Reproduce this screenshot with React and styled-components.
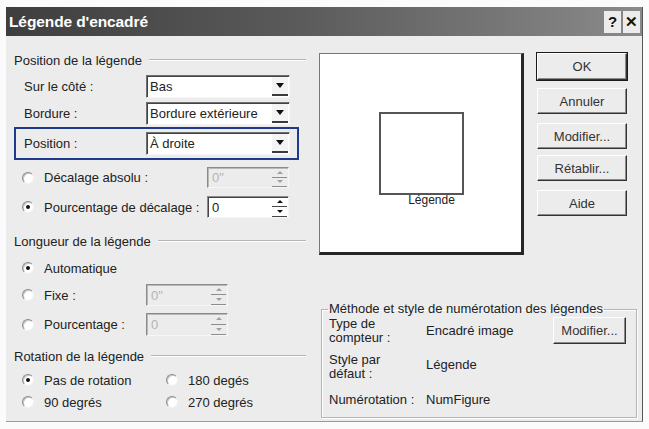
import React from "react"
import styled, { createGlobalStyle } from "styled-components"

const Global = createGlobalStyle`
  body {
    margin: 0;
    background: #fbfbfb;
    font-family: "Liberation Sans", Arial, sans-serif;
    font-size: 13px;
    color: #222;
  }
`

const Window = styled.div`
  width: 637px;
  height: 415px;
  margin: 7px 0 0 6px;
  background: #ececec;
  border-right: 1px solid #555;
  border-bottom: 1px solid #9a9a9a;
  box-sizing: border-box;
  display: flex;
  flex-direction: column;
`

const TitleBar = styled.div`
  height: 29px;
  flex: none;
  display: flex;
  align-items: center;
  padding: 0 2px 0 3px;
  background: linear-gradient(90deg, #3e3e3e 0%, #5a5a5a 45%, #8a8a8a 100%);
`

const Title = styled.div`
  flex: 1;
  color: #fff;
  font-weight: bold;
  font-size: 15.5px;
  letter-spacing: -0.1px;
`

const CaptionButton = styled.div`
  width: 17px;
  height: 22px;
  margin-left: 2px;
  background: #ececec;
  display: flex;
  align-items: center;
  justify-content: center;
  font-weight: bold;
  font-size: 15px;
  color: #111;
`

const Body = styled.div`
  flex: 1;
  display: flex;
  padding: 17px 6px 0 8px;
`

const LeftCol = styled.div`
  width: 292px;
  flex: none;
  display: flex;
  flex-direction: column;
`

const SectionHeader = styled.div`
  display: flex;
  align-items: center;
  height: 14px;
  margin-top: ${(p) => p.$top || 0}px;
  &::after {
    content: "";
    flex: 1;
    margin-left: 7px;
    border-top: 1px solid #b4b4b4;
    border-bottom: 1px solid #fff;
  }
`

const FieldRow = styled.div`
  display: flex;
  align-items: center;
  height: 23px;
  padding-left: 10px;
  margin-top: ${(p) => p.$top || 0}px;
`

const Highlight = styled.div`
  width: 285px;
  box-sizing: border-box;
  border: 2px solid #1d3a8c;
  padding: 3px 0 3px 8px;
  margin-top: 2px;
  display: flex;
  align-items: center;
`

const FieldLabel = styled.span`
  width: 122px;
  flex: none;
`

const SelectBox = styled.div`
  width: 144px;
  height: 23px;
  box-sizing: border-box;
  background: #fff;
  border: 1px solid;
  border-color: #6e6e6e #f6f6f6 #f6f6f6 #6e6e6e;
  box-shadow: inset 1px 1px 0 #444;
  display: flex;
  align-items: center;
  padding-left: 3px;
`

const SelectText = styled.span`
  flex: 1;
`

const DropButton = styled.span`
  width: 16px;
  height: 19px;
  margin-right: 1px;
  box-sizing: border-box;
  background: #f4f4f4;
  border-bottom: 2px solid #3a3a3a;
  display: flex;
  align-items: center;
  justify-content: center;
  &::before {
    content: "";
    border-left: 4px solid transparent;
    border-right: 4px solid transparent;
    border-top: 5px solid #111;
  }
`

const RadioRow = styled.div`
  display: flex;
  align-items: center;
  height: ${(p) => p.$h || 20}px;
  padding-left: 8px;
  margin-top: ${(p) => p.$top || 0}px;
`

const RadioDot = styled.span`
  width: 12px;
  height: 12px;
  flex: none;
  box-sizing: border-box;
  border-radius: 50%;
  background: #fff;
  border: 1px solid;
  border-color: #8a8a8a #f2f2f2 #f2f2f2 #8a8a8a;
  box-shadow: inset 1px 1px 0 #c8c8c8;
  display: flex;
  align-items: center;
  justify-content: center;
  margin-right: 10px;
  &::after {
    content: "";
    width: 4px;
    height: 4px;
    border-radius: 50%;
    background: ${(p) => (p.$on ? "#111" : "transparent")};
  }
`

const RadioLabel = styled.span`
  width: ${(p) => (p.$w ? p.$w + "px" : "auto")};
  flex: none;
`

const Spin = styled.div`
  width: 82px;
  height: ${(p) => p.$h || 22}px;
  box-sizing: border-box;
  background: ${(p) => (p.$disabled ? "#ececec" : "#fff")};
  color: ${(p) => (p.$disabled ? "#b4b4b4" : "#222")};
  border: 1px solid;
  border-color: #8a8a8a #f6f6f6 #f6f6f6 #8a8a8a;
  box-shadow: inset 1px 1px 0 ${(p) => (p.$disabled ? "#b8b8b8" : "#444")};
  display: flex;
  align-items: center;
  padding-left: 4px;
`

const SpinValue = styled.span`
  flex: 1;
`

const SpinArrows = styled.span`
  width: 15px;
  height: 100%;
  display: flex;
  flex-direction: column;
  margin-right: 1px;
`

const SpinArrow = styled.span`
  flex: 1;
  display: flex;
  align-items: center;
  justify-content: center;
  border-bottom: 1px solid ${(p) => (p.$disabled ? "#8e8e8e" : "#444")};
  &::before {
    content: "";
    border-left: 3px solid transparent;
    border-right: 3px solid transparent;
    ${(p) => (p.$down ? "border-top" : "border-bottom")}: 3px solid
      ${(p) => (p.$disabled ? "#a0a0a0" : "#111")};
  }
`

const RadioGrid = styled.div`
  display: grid;
  grid-template-columns: 144px 1fr;
  row-gap: 2px;
  margin-top: 7px;
`

const RightCol = styled.div`
  flex: 1;
  margin-left: 13px;
  display: flex;
  flex-direction: column;
`

const TopRight = styled.div`
  display: flex;
  align-items: flex-start;
`

const Preview = styled.div`
  width: 205px;
  height: 202px;
  box-sizing: border-box;
  background: #fff;
  border-top: 1px solid #777;
  border-left: 1px solid #777;
  border-right: 3px solid #262626;
  border-bottom: 3px solid #262626;
  display: flex;
  flex-direction: column;
  align-items: center;
  padding-top: 58px;
`

const FrameSquare = styled.div`
  width: 85px;
  height: 83px;
  box-sizing: border-box;
  border: 2px solid #555;
  margin-left: 2px;
`

const PreviewCaption = styled.div`
  font-size: 12px;
  margin: -1px 0 0 22px;
  line-height: 13px;
`

const ButtonStack = styled.div`
  margin-left: 13px;
  width: 90px;
  display: flex;
  flex-direction: column;
`

const DialogButton = styled.div`
  width: ${(p) => p.$w || 90}px;
  height: ${(p) => p.$h || 26}px;
  box-sizing: border-box;
  margin-top: ${(p) => p.$top || 0}px;
  background: #ececec;
  border: 1px solid;
  border-color: #fff #333 #333 #fff;
  box-shadow: ${(p) =>
    p.$default ? "0 0 0 1px #1a1a1a, inset -1px -1px 0 #8a8a8a" : "inset -1px -1px 0 #8a8a8a"};
  display: flex;
  align-items: center;
  justify-content: center;
  color: #333;
`

const Group = styled.fieldset`
  margin: 47px 0 0 2px;
  width: 316px;
  height: 116px;
  box-sizing: border-box;
  border: 1px solid #b4b4b4;
  box-shadow: inset 1px 1px 0 #fff, 1px 1px 0 #fff;
  padding: 0 10px 0 7px;
`

const GroupLegend = styled.legend`
  padding: 0 1px;
  margin-left: -1px;
  line-height: 14px;
`

const InfoGrid = styled.div`
  display: grid;
  grid-template-columns: 97px 1fr auto;
  align-items: center;
  line-height: 14px;
`

const InfoLabel = styled.div`
  padding: ${(p) => p.$pad || "0"};
`

const InfoValue = styled.div`
  padding: ${(p) => p.$pad || "0"};
`

function Select({ value }) {
  return (
    <SelectBox>
      <SelectText>{value}</SelectText>
      <DropButton />
    </SelectBox>
  )
}

function SpinBox({ value, disabled, h }) {
  return (
    <Spin $disabled={disabled} $h={h}>
      <SpinValue>{value}</SpinValue>
      <SpinArrows>
        <SpinArrow $disabled={disabled} />
        <SpinArrow $disabled={disabled} $down />
      </SpinArrows>
    </Spin>
  )
}

export default function App() {
  return (
    <>
      <Global />
      <Window>
        <TitleBar>
          <Title>Légende d'encadré</Title>
          <CaptionButton>?</CaptionButton>
          <CaptionButton>✕</CaptionButton>
        </TitleBar>
        <Body>
          <LeftCol>
            <SectionHeader>Position de la légende</SectionHeader>
            <FieldRow $top={8}>
              <FieldLabel>Sur le côté :</FieldLabel>
              <Select value="Bas" />
            </FieldRow>
            <FieldRow $top={4}>
              <FieldLabel>Bordure :</FieldLabel>
              <Select value="Bordure extérieure" />
            </FieldRow>
            <Highlight>
              <FieldLabel>Position :</FieldLabel>
              <Select value="À droite" />
            </Highlight>
            <RadioRow $h={21} $top={7}>
              <RadioDot />
              <RadioLabel $w={163}>Décalage absolu :</RadioLabel>
              <SpinBox value="0&quot;" disabled h={21} />
            </RadioRow>
            <RadioRow $h={22} $top={8}>
              <RadioDot $on />
              <RadioLabel $w={163}>Pourcentage de décalage :</RadioLabel>
              <SpinBox value="0" />
            </RadioRow>

            <SectionHeader $top={16}>Longueur de la légende</SectionHeader>
            <RadioRow $top={10}>
              <RadioDot $on />
              <RadioLabel>Automatique</RadioLabel>
            </RadioRow>
            <RadioRow $h={22} $top={6}>
              <RadioDot />
              <RadioLabel $w={102}>Fixe :</RadioLabel>
              <SpinBox value="0&quot;" disabled />
            </RadioRow>
            <RadioRow $h={23} $top={7}>
              <RadioDot />
              <RadioLabel $w={102}>Pourcentage :</RadioLabel>
              <SpinBox value="0" disabled h={23} />
            </RadioRow>

            <SectionHeader $top={13}>Rotation de la légende</SectionHeader>
            <RadioGrid>
              <RadioRow>
                <RadioDot $on />
                <RadioLabel>Pas de rotation</RadioLabel>
              </RadioRow>
              <RadioRow>
                <RadioDot />
                <RadioLabel>180 degés</RadioLabel>
              </RadioRow>
              <RadioRow>
                <RadioDot />
                <RadioLabel>90 degrés</RadioLabel>
              </RadioRow>
              <RadioRow>
                <RadioDot />
                <RadioLabel>270 degrés</RadioLabel>
              </RadioRow>
            </RadioGrid>
          </LeftCol>

          <RightCol>
            <TopRight>
              <Preview>
                <FrameSquare />
                <PreviewCaption>Légende</PreviewCaption>
              </Preview>
              <ButtonStack>
                <DialogButton $default $h={27}>OK</DialogButton>
                <DialogButton $top={8}>Annuler</DialogButton>
                <DialogButton $top={9}>Modifier...</DialogButton>
                <DialogButton $top={6}>Rétablir...</DialogButton>
                <DialogButton $top={9}>Aide</DialogButton>
              </ButtonStack>
            </TopRight>

            <Group>
              <GroupLegend>Méthode et style de numérotation des légendes</GroupLegend>
              <InfoGrid>
                <InfoLabel $pad="1px 0 0">
                  Type de
                  <br />
                  compteur :
                </InfoLabel>
                <InfoValue>Encadré image</InfoValue>
                <DialogButton $w={73} $h={27}>Modifier...</DialogButton>
                <InfoLabel $pad="8px 0 0">
                  Style par
                  <br />
                  défaut :
                </InfoLabel>
                <InfoValue $pad="4px 0 0">Légende</InfoValue>
                <span />
                <InfoLabel $pad="12px 0 0">Numérotation :</InfoLabel>
                <InfoValue $pad="12px 0 0">NumFigure</InfoValue>
                <span />
              </InfoGrid>
            </Group>
          </RightCol>
        </Body>
      </Window>
    </>
  )
}
